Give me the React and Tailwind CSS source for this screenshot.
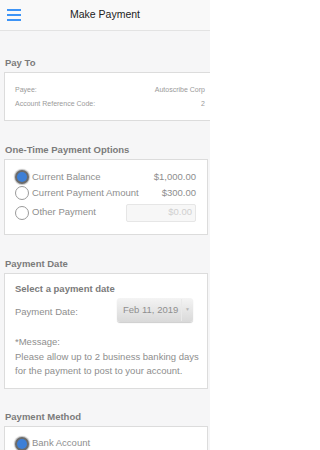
import { useState } from 'react'

const font = { fontFamily: '"Liberation Sans", Arial, sans-serif' }

function Radio({ checked }) {
  return checked ? (
    <span className="flex h-[14px] w-[14px] shrink-0 items-center justify-center rounded-full bg-[#6b6b6b] shadow-[0_0_1px_1px_rgba(0,0,0,0.25)]">
      <span className="h-[10px] w-[10px] rounded-full bg-[#3d7fd6]" />
    </span>
  ) : (
    <span className="h-[14px] w-[14px] shrink-0 rounded-full border border-[#9a9a9a] bg-white" />
  )
}

function Section({ title, className, cardClass = 'mr-[2px]', children }) {
  return (
    <div className={className}>
      <div className="pl-[5px] text-[9.5px] font-bold leading-[12px] text-[#7b7b7b]">{title}</div>
      <div className={`mt-[3px] ml-[4px] border border-[#dcdcdc] bg-white ${cardClass}`}>{children}</div>
    </div>
  )
}

export default function App() {
  const [option, setOption] = useState('balance')
  const [method, setMethod] = useState('bank')

  return (
    <div className="h-[450px] w-[210px] overflow-hidden bg-[#f6f6f7]" style={font}>
      {/* Header */}
      <div className="flex h-[31px] items-center border-b border-[#e3e3e3] bg-[#f9f9f9]">
        <div className="flex w-[28px] flex-col gap-[3px] pl-[7px]">
          <span className="h-[2px] w-[14px] bg-[#3d94f6]" />
          <span className="h-[2px] w-[14px] bg-[#3d94f6]" />
          <span className="h-[2px] w-[14px] bg-[#3d94f6]" />
        </div>
        <div className="flex-1 text-center text-[10.5px] text-[#222]">Make Payment</div>
        <div className="w-[28px]" />
      </div>

      {/* Pay To */}
      <Section title="Pay To" className="pt-[26px]" cardClass="mr-[-4px]">
        <div className="pt-[10px] pb-[9px] pl-[10px] pr-[8px] text-[7px] leading-[14px] text-[#9a9a9a]">
          <div className="flex justify-between">
            <span>Payee:</span>
            <span>Autoscribe Corp</span>
          </div>
          <div className="flex justify-between">
            <span>Account Reference Code:</span>
            <span>2</span>
          </div>
        </div>
      </Section>

      {/* One-Time Payment Options */}
      <Section title="One-Time Payment Options" className="mt-[23px]">
        <div className="pt-[9px] pb-[12px] pl-[10px] pr-[11px] text-[9.5px] text-[#8e8e8e]">
          <div className="flex h-[16px] items-center" onClick={() => setOption('balance')}>
            <Radio checked={option === 'balance'} />
            <span className="ml-[3px] flex-1">Current Balance</span>
            <span>$1,000.00</span>
          </div>
          <div className="flex h-[16px] items-center" onClick={() => setOption('payment')}>
            <Radio checked={option === 'payment'} />
            <span className="ml-[3px] flex-1">Current Payment Amount</span>
            <span>$300.00</span>
          </div>
          <div className="mt-[2px] flex h-[19px] items-center" onClick={() => setOption('other')}>
            <Radio checked={option === 'other'} />
            <span className="ml-[3px] flex-1">Other Payment</span>
            <div className="flex h-[18px] w-[70px] items-center justify-end rounded-[2px] border border-[#e6e6e6] bg-[#f7f7f7] pr-[3px] text-[#d0d0d0]">
              $0.00
            </div>
          </div>
        </div>
      </Section>

      {/* Payment Date */}
      <Section title="Payment Date" className="mt-[23px]">
        <div className="pt-[9px] pb-[9px] pl-[10px] pr-[4px] text-[9.5px] text-[#8e8e8e]">
          <div className="font-bold leading-[12px] text-[#7b7b7b]">Select a payment date</div>
          <div className="mt-[3px] flex h-[24px] items-center">
            <span className="flex-1 pt-[5px]">Payment Date:</span>
            <div className="mr-[10px] flex h-[24px] w-[76px] items-center rounded-[3px] bg-gradient-to-b from-[#f4f4f4] to-[#d9d9d9] shadow-[0_1px_1px_rgba(0,0,0,0.2)]">
              <span className="flex-1 pl-[6px] text-[#8f8f8f]">Feb 11, 2019</span>
              <span className="h-[22px] w-px bg-[#e9e9e9]" />
              <span className="flex w-[11px] justify-center text-[5px] text-[#b5b5b5]">▼</span>
            </div>
          </div>
          <div className="mt-[13px] whitespace-nowrap leading-[14.5px]">
            <div>*Message:</div>
            <div>Please allow up to 2 business banking days</div>
            <div>for the payment to post to your account.</div>
          </div>
        </div>
      </Section>

      {/* Payment Method */}
      <Section title="Payment Method" className="mt-[22px]">
        <div className="pt-[9px] pb-[10px] pl-[10px] text-[9.5px] text-[#8e8e8e]">
          <div className="flex h-[16px] items-center" onClick={() => setMethod('bank')}>
            <Radio checked={method === 'bank'} />
            <span className="ml-[3px]">Bank Account</span>
          </div>
          <div className="flex h-[16px] items-center" onClick={() => setMethod('card')}>
            <Radio checked={method === 'card'} />
            <span className="ml-[3px]">Credit / Debit Card</span>
          </div>
        </div>
      </Section>
    </div>
  )
}
